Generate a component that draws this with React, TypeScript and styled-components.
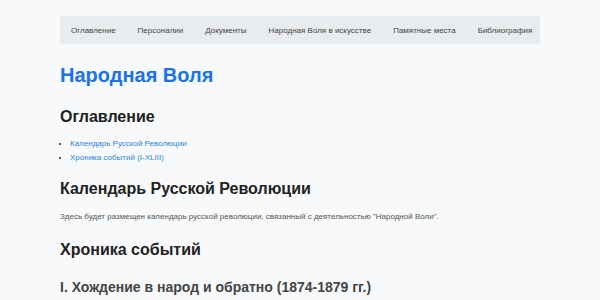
import React from "react";
import styled, { createGlobalStyle } from "styled-components";

const Global = createGlobalStyle`
  html, body { margin: 0; padding: 0; background: #f8f9fa; }
  body { font-family: "Liberation Sans", Arial, sans-serif; color: #222; }
`;

const Page = styled.div`
  width: 480px;
  margin: 0 auto;
  padding-top: 16px;
`;

const Nav = styled.nav`
  display: flex;
  align-items: center;
  height: 28px;
  background: #e9ecef;
`;

const NavItem = styled.a`
  font-size: 8px;
  color: #444;
  padding: 0 11px;
  text-decoration: none;
  white-space: nowrap;
`;

const Title = styled.h1`
  margin: 19px 0 0;
  font-size: 20px;
  line-height: 24px;
  color: #1a73e8;
  font-weight: bold;
`;

const H2 = styled.h2<{ $top: number }>`
  margin: ${(p) => p.$top}px 0 0;
  font-size: 16px;
  line-height: 20px;
  color: #222;
  font-weight: bold;
`;

const List = styled.ul`
  margin: 10px 0 0;
  padding-left: 10px;
  list-style: disc;
  font-size: 8px;
  line-height: 14px;
  & li::marker { color: #222; }
`;

const Link = styled.a`
  color: #2a85d8;
  text-decoration: none;
`;

const Para = styled.p`
  margin: 13px 0 0;
  font-size: 8px;
  line-height: 10px;
  color: #555;
`;

const H3 = styled.h3`
  margin: 18px 0 0;
  font-size: 14px;
  line-height: 18px;
  color: #444;
  font-weight: bold;
`;

const navItems = [
  "Оглавление",
  "Персоналии",
  "Документы",
  "Народная Воля в искусстве",
  "Памятные места",
  "Библиография",
];

export default function App() {
  return (
    <>
      <Global />
      <Page>
        <Nav>
          {navItems.map((n) => (
            <NavItem key={n}>{n}</NavItem>
          ))}
        </Nav>
        <Title>Народная Воля</Title>
        <H2 $top={20}>Оглавление</H2>
        <List>
          <li><Link>Календарь Русской Революции</Link></li>
          <li><Link>Хроника событий (I-XLIII)</Link></li>
        </List>
        <H2 $top={14}>Календарь Русской Революции</H2>
        <Para>
          Здесь будет размещен календарь русской революции, связанный с деятельностью "Народной Воли".
        </Para>
        <H2 $top={18}>Хроника событий</H2>
        <H3>I. Хождение в народ и обратно (1874-1879 гг.)</H3>
      </Page>
    </>
  );
}
